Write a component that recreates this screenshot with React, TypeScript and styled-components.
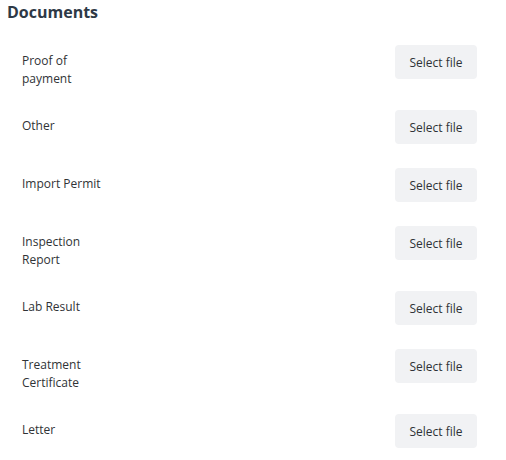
import React from "react";
import styled, { createGlobalStyle } from "styled-components";

const GlobalStyle = createGlobalStyle`
  html, body {
    margin: 0;
    padding: 0;
    background: #ffffff;
  }
  body {
    font-family: "Open Sans", "Noto Sans", sans-serif;
    -webkit-font-smoothing: antialiased;
  }
`;

const Page = styled.section`
  padding: 0 7px;
  width: 506px;
  box-sizing: border-box;
`;

const Heading = styled.h2`
  margin: 0;
  font-size: 16px;
  line-height: 25px;
  font-weight: 700;
  color: #2e3946;
`;

const List = styled.div`
  display: flex;
  flex-direction: column;
  gap: 22px;
  padding-top: 20px;
`;

const Row = styled.div`
  display: flex;
  align-items: flex-start;
  justify-content: space-between;
  min-height: 36px;
  padding: 0 22px 0 15px;
`;

const Label = styled.span`
  width: 88px;
  padding-top: 7px;
  font-size: 12px;
  line-height: 18px;
  color: #303336;
`;

const SelectButton = styled.button`
  width: 82px;
  height: 34px;
  border: none;
  border-radius: 4px;
  background: #f1f2f4;
  color: #2f3236;
  font-family: "Open Sans", "Noto Sans", sans-serif;
  font-size: 12px;
  cursor: pointer;
  padding: 0;
`;

const documents = [
  "Proof of payment",
  "Other",
  "Import Permit",
  "Inspection Report",
  "Lab Result",
  "Treatment Certificate",
  "Letter",
];

export default function App() {
  return (
    <>
      <GlobalStyle />
      <Page>
        <Heading>Documents</Heading>
        <List>
          {documents.map((d) => (
            <Row key={d}>
              <Label>{d}</Label>
              <SelectButton type="button">Select file</SelectButton>
            </Row>
          ))}
        </List>
      </Page>
    </>
  );
}
